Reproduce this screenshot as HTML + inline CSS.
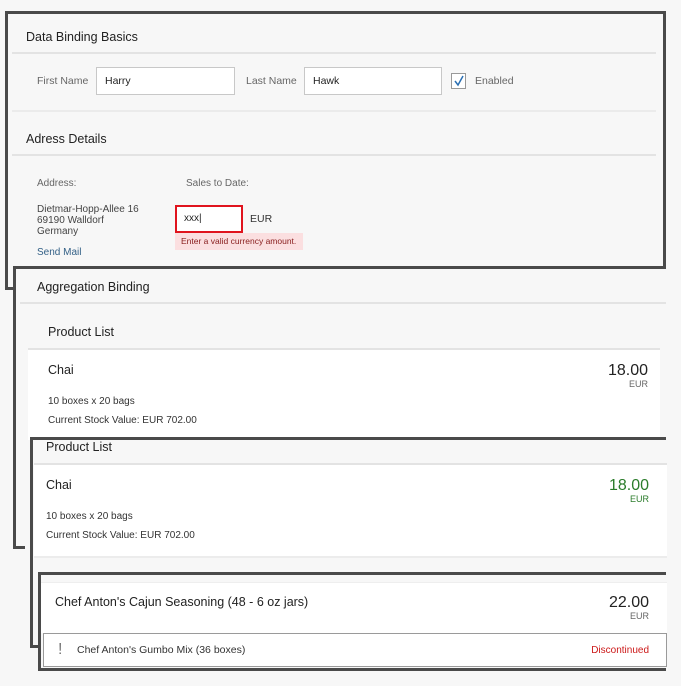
<!DOCTYPE html>
<html><head><meta charset="utf-8"><style>
*{margin:0;padding:0;box-sizing:border-box}
body{width:681px;height:686px;background:#f7f7f7;position:relative;overflow:hidden;font-family:"Liberation Sans",Arial,sans-serif;color:#333}
.a{position:absolute}
.t{position:absolute;white-space:nowrap;line-height:1}
.line{position:absolute;height:2px;background:#e3e3e3}
.fr{position:absolute;background:#4a4a4a}
.inp{position:absolute;background:#fff;border:1px solid #c8c8c8}
</style></head><body>

<!-- Frame 1 -->
<div class="a" style="left:7px;top:13px;width:656px;height:253px;background:#f7f7f7"></div>
<div class="fr" style="left:5px;top:11px;width:661px;height:3px"></div>
<div class="fr" style="left:5px;top:11px;width:3px;height:279px"></div>
<div class="fr" style="left:5px;top:287px;width:10px;height:3px"></div>
<div class="fr" style="left:663px;top:11px;width:3px;height:257px"></div>
<div class="t" style="left:26px;top:31px;font-size:12.5px;color:#222">Data Binding Basics</div>
<div class="line" style="left:12px;top:52px;width:644px"></div>
<div class="t" style="left:37px;top:76px;font-size:10.5px;color:#666">First Name</div>
<div class="inp" style="left:96px;top:67px;width:139px;height:28px"></div>
<div class="t" style="left:105px;top:76px;font-size:10.5px;color:#222">Harry</div>
<div class="t" style="left:246px;top:76px;font-size:10.5px;color:#666">Last Name</div>
<div class="inp" style="left:304px;top:67px;width:138px;height:28px"></div>
<div class="t" style="left:313px;top:76px;font-size:10.5px;color:#222">Hawk</div>
<div class="a" style="left:451px;top:73px;width:15px;height:16px;border:1px solid #999;background:#fff"></div>
<svg class="a" style="left:451px;top:73px" width="15" height="16"><path d="M4 8 L7 12 L12 3" stroke="#2a6fb3" stroke-width="1.5" fill="none"/></svg>
<div class="t" style="left:475px;top:76px;font-size:10.5px;color:#666">Enabled</div>
<div class="line" style="left:12px;top:110px;width:644px;background:#ebebeb"></div>
<div class="t" style="left:26px;top:133px;font-size:12.5px;color:#222">Adress Details</div>
<div class="line" style="left:12px;top:154px;width:644px"></div>
<div class="t" style="left:37px;top:179px;font-size:10px;color:#666">Address:</div>
<div class="t" style="left:186px;top:179px;font-size:10px;color:#666">Sales to Date:</div>
<div class="t" style="left:37px;top:204px;font-size:10px;color:#444;line-height:11px">Dietmar-Hopp-Allee 16<br>69190 Walldorf<br>Germany</div>
<div class="a" style="left:175px;top:205px;width:68px;height:28px;border:2px solid #e0141e;background:#fff"></div>
<div class="t" style="left:184px;top:214px;font-size:10px;color:#222">xxx|</div>
<div class="t" style="left:250px;top:214px;font-size:10.5px;color:#333">EUR</div>
<div class="a" style="left:175px;top:233px;width:128px;height:17px;background:#fbdfe0"></div>
<div class="t" style="left:181px;top:237px;font-size:8.5px;color:#8a2020">Enter a valid currency amount.</div>
<div class="t" style="left:37px;top:248px;font-size:10px;color:#346187">Send Mail</div>

<!-- Frame 2 -->
<div class="a" style="left:16px;top:269px;width:665px;height:280px;background:#f7f7f7"></div>
<div class="fr" style="left:13px;top:266px;width:653px;height:3px"></div>
<div class="fr" style="left:13px;top:266px;width:3px;height:283px"></div>
<div class="fr" style="left:13px;top:546px;width:12px;height:3px"></div>
<div class="t" style="left:37px;top:281px;font-size:12.5px;color:#222">Aggregation Binding</div>
<div class="line" style="left:20px;top:302px;width:646px"></div>
<div class="t" style="left:48px;top:326px;font-size:12.5px;color:#222">Product List</div>
<div class="line" style="left:28px;top:348px;width:632px"></div>
<div class="a" style="left:28px;top:350px;width:632px;height:90px;background:#fff"></div>
<div class="t" style="left:48px;top:364px;font-size:12.5px;color:#222">Chai</div>
<div class="t" style="right:33px;top:363px;font-size:16px;color:#222">18.00</div>
<div class="t" style="right:33px;top:380px;font-size:9px;color:#666">EUR</div>
<div class="t" style="left:48px;top:397px;font-size:10px;color:#333">10 boxes x 20 bags</div>
<div class="t" style="left:48px;top:416px;font-size:10px;color:#333">Current Stock Value: EUR 702.00</div>

<!-- Frame 3 -->
<div class="a" style="left:33px;top:440px;width:634px;height:135px;background:#f7f7f7"></div>
<div class="fr" style="left:30px;top:437px;width:636px;height:3px"></div>
<div class="fr" style="left:30px;top:437px;width:3px;height:211px"></div>
<div class="fr" style="left:30px;top:645px;width:11px;height:3px"></div>
<div class="t" style="left:46px;top:441px;font-size:12.5px;color:#222">Product List</div>
<div class="line" style="left:34px;top:463px;width:633px"></div>
<div class="a" style="left:34px;top:465px;width:633px;height:92px;background:#fff"></div>
<div class="line" style="left:34px;top:556px;width:633px;background:#ececec"></div>
<div class="t" style="left:46px;top:479px;font-size:12.5px;color:#222">Chai</div>
<div class="t" style="right:32px;top:478px;font-size:16px;color:#2b7c2b">18.00</div>
<div class="t" style="right:32px;top:495px;font-size:9px;color:#2b7c2b">EUR</div>
<div class="t" style="left:46px;top:512px;font-size:10px;color:#333">10 boxes x 20 bags</div>
<div class="t" style="left:46px;top:531px;font-size:10px;color:#333">Current Stock Value: EUR 702.00</div>

<!-- Frame 4 -->
<div class="a" style="left:41px;top:575px;width:626px;height:95px;background:#f7f7f7"></div>
<div class="fr" style="left:38px;top:572px;width:628px;height:3px"></div>
<div class="fr" style="left:38px;top:572px;width:3px;height:99px"></div>
<div class="fr" style="left:38px;top:668px;width:628px;height:3px"></div>
<div class="a" style="left:41px;top:582px;width:626px;height:51px;background:#fff;border-top:1px solid #eee"></div>
<div class="t" style="left:55px;top:596px;font-size:12.5px;color:#222">Chef Anton's Cajun Seasoning (48 - 6 oz jars)</div>
<div class="t" style="right:32px;top:595px;font-size:16px;color:#222">22.00</div>
<div class="t" style="right:32px;top:612px;font-size:9px;color:#666">EUR</div>
<div class="a" style="left:43px;top:633px;width:624px;height:34px;border:1px solid #9a9a9a;background:#fff"></div>
<div class="t" style="left:58px;top:642px;font-size:16px;color:#777">!</div>
<div class="t" style="left:77px;top:645px;font-size:10.5px;color:#333">Chef Anton's Gumbo Mix (36 boxes)</div>
<div class="t" style="right:32px;top:646px;font-size:10px;color:#cc1919">Discontinued</div>
</body></html>
